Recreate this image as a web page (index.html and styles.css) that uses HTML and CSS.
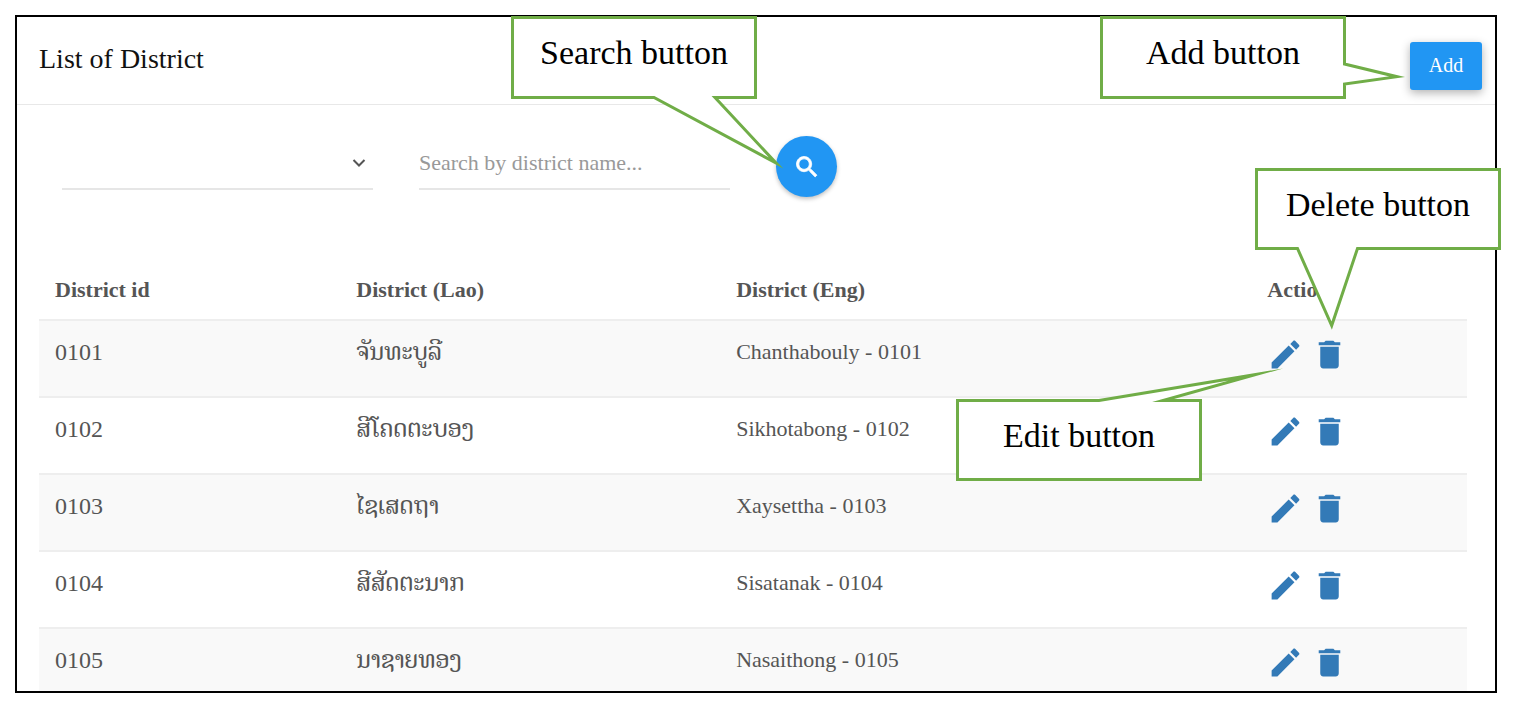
FILE: index.html
```html
<!DOCTYPE html>
<html lang="en">
<head>
  <meta charset="UTF-8" />
  <meta name="viewport" content="width=device-width, initial-scale=1.0"/>
  <title>List of District</title>
  <link rel="stylesheet" href="styles.css">
</head>
<body>
  <svg class="sprite" aria-hidden="true">
    <symbol id="pencil" viewBox="0 0 24 24">
      <path d="M20.71,7.04C21.1,6.65 21.1,6 20.71,5.63L18.37,3.29C18,2.9 17.35,2.9 16.96,3.29L15.12,5.12L18.87,8.87M3,17.25V21H6.75L17.81,9.93L14.06,6.18L3,17.25Z"/>
    </symbol>
    <symbol id="trash" viewBox="0 0 24 24">
      <path d="M19,4H15.5L14.5,3H9.5L8.5,4H5V6H19M6,19A2,2 0 0,0 8,21H16A2,2 0 0,0 18,19V7H6V19Z"/>
    </symbol>
  </svg>

  <div class="panel">
    <div class="header">
      <h1>List of District</h1>
      <button type="button" class="btn-add">Add</button>
    </div>

    <div class="content">
      <form class="filters" id="searchForm">
        <div class="field">
          <select id="province" aria-label="Province">
            <option value=""></option>
          </select>
          <svg class="chevron" viewBox="0 0 14 10"><path d="M1.5 2L7 7.5L12.5 2"/></svg>
        </div>
        <div class="field">
          <input type="text" id="keyword" aria-label="District name" placeholder="Search by district name...">
        </div>
        <div class="field">
          <button type="submit" class="btn-search" aria-label="Search">
            <svg viewBox="0 0 24 24"><path d="M15.5 14h-.79l-.28-.27C15.41 12.59 16 11.11 16 9.5 16 5.91 13.09 3 9.5 3S3 5.91 3 9.5 5.91 16 9.5 16c1.61 0 3.09-.59 4.23-1.57l.27.28v.79l5 4.99L20.49 19l-4.99-5zm-6 0C7.01 14 5 11.99 5 9.5S7.01 5 9.5 5 14 7.01 14 9.5 11.99 14 9.5 14z"/></svg>
          </button>
        </div>
      </form>

      <table class="districts">
        <thead>
          <tr>
            <th class="col-id">District id</th>
            <th class="col-lao">District (Lao)</th>
            <th class="col-eng">District (Eng)</th>
            <th>Action</th>
          </tr>
        </thead>
        <tbody>
          <tr>
            <td class="id">0101</td>
            <td class="lao" lang="lo">ຈັນທະບູລີ</td>
            <td>Chanthabouly - 0101</td>
            <td class="action"><a href="#" aria-label="Edit"><svg><use href="#pencil"/></svg></a><a href="#" aria-label="Delete"><svg><use href="#trash"/></svg></a></td>
          </tr>
          <tr>
            <td class="id">0102</td>
            <td class="lao" lang="lo">ສີໂຄດຕະບອງ</td>
            <td>Sikhotabong - 0102</td>
            <td class="action"><a href="#" aria-label="Edit"><svg><use href="#pencil"/></svg></a><a href="#" aria-label="Delete"><svg><use href="#trash"/></svg></a></td>
          </tr>
          <tr>
            <td class="id">0103</td>
            <td class="lao" lang="lo">ໄຊເສດຖາ</td>
            <td>Xaysettha - 0103</td>
            <td class="action"><a href="#" aria-label="Edit"><svg><use href="#pencil"/></svg></a><a href="#" aria-label="Delete"><svg><use href="#trash"/></svg></a></td>
          </tr>
          <tr>
            <td class="id">0104</td>
            <td class="lao" lang="lo">ສີສັດຕະນາກ</td>
            <td>Sisatanak - 0104</td>
            <td class="action"><a href="#" aria-label="Edit"><svg><use href="#pencil"/></svg></a><a href="#" aria-label="Delete"><svg><use href="#trash"/></svg></a></td>
          </tr>
          <tr>
            <td class="id">0105</td>
            <td class="lao" lang="lo">ນາຊາຍທອງ</td>
            <td>Nasaithong - 0105</td>
            <td class="action"><a href="#" aria-label="Edit"><svg><use href="#pencil"/></svg></a><a href="#" aria-label="Delete"><svg><use href="#trash"/></svg></a></td>
          </tr>
        </tbody>
      </table>
    </div>
  </div>

  <!-- callouts -->
  <div class="callout callout-search">
    <svg viewBox="0 0 246 83"><polygon points="1.5,1.5 244.5,1.5 244.5,81.5 204,81.5 265,147 143,81.5 1.5,81.5"/></svg>
    <span>Search button</span>
  </div>
  <div class="callout callout-add">
    <svg viewBox="0 0 246 83"><polygon points="1.5,1.5 244.5,1.5 244.5,48 297,60.7 244.5,68 244.5,81.5 1.5,81.5"/></svg>
    <span>Add button</span>
  </div>
  <div class="callout callout-delete">
    <svg viewBox="0 0 246 83"><polygon points="1.5,1.5 244.5,1.5 244.5,80.5 102.5,80.5 76.7,157.6 42.5,80.5 1.5,80.5"/></svg>
    <span>Delete button</span>
  </div>
  <div class="callout callout-edit">
    <svg viewBox="0 0 246 83"><polygon points="1.5,1.5 143,1.5 300,-24.5 207,1.5 244.5,1.5 244.5,80.5 1.5,80.5"/></svg>
    <span>Edit button</span>
  </div>

  <script>
    document.getElementById("searchForm").addEventListener("submit", function(e) {
      e.preventDefault();
      const keyword = document.getElementById("keyword").value.toLowerCase();
      document.querySelectorAll(".districts tbody tr").forEach(row => {
        row.hidden = !row.textContent.toLowerCase().includes(keyword);
      });
    });
  </script>
</body>
</html>
```
FILE: styles.css
```css
* {
  box-sizing: border-box;
}
body {
  position: relative;
  margin: 0;
  padding: 15px 17px 11px 15px;
  font-family: "Liberation Serif", "Times New Roman", serif;
  font-size: 22px;
  line-height: 28px;
  background: white;
  color: #555;
}
.sprite {
  position: absolute;
  width: 0;
  height: 0;
}
.panel {
  height: calc(100vh - 26px);
  border: 2px solid black;
  overflow: hidden;
}
.header {
  display: flex;
  justify-content: space-between;
  align-items: center;
  height: 88px;
  padding: 0 13px 0 22px;
  border-bottom: 1px solid #e8e8e8;
}
.header h1 {
  margin: 0 0 4px;
  font-size: 28px;
  font-weight: normal;
  color: #111;
}
.btn-add {
  width: 72px;
  height: 48px;
  margin-top: 10px;
  font-family: inherit;
  font-size: 20px;
  color: white;
  background: #2196f3;
  border: none;
  border-radius: 3px;
  box-shadow: 0 3px 10px rgba(0,0,0,0.3);
  cursor: pointer;
}
.content {
  padding: 31px 28px 0 22px;
}
.filters {
  display: flex;
  margin-bottom: 64px;
}
.field {
  position: relative;
  width: 25%;
  padding: 0 23px;
}
.field input, .field select {
  display: block;
  width: 100%;
  height: 54px;
  padding: 2px 0 0;
  font-family: inherit;
  font-size: 22px;
  color: #555;
  background: transparent;
  border: none;
  border-bottom: 2px solid #e6e6e6;
  border-radius: 0;
  outline: none;
  appearance: none;
}
.field input::placeholder {
  color: #999;
  opacity: 1;
}
.chevron {
  position: absolute;
  top: 22px;
  right: 30px;
  width: 14px;
  height: 10px;
  fill: none;
  stroke: #555;
  stroke-width: 2;
  pointer-events: none;
}
.btn-search {
  display: flex;
  justify-content: center;
  align-items: center;
  width: 61px;
  height: 61px;
  padding: 0;
  background: #2196f3;
  border: none;
  border-radius: 50%;
  box-shadow: 0 2px 4px rgba(0,0,0,0.25);
  cursor: pointer;
}
.btn-search svg {
  width: 28px;
  height: 28px;
  fill: white;
  stroke: white;
  stroke-width: 0.7;
}

.districts {
  width: 100%;
  table-layout: fixed;
  border-collapse: separate;
  border-spacing: 0;
}
.col-id { width: 21.1%; }
.col-lao { width: 26.6%; }
.col-eng { width: 37.2%; }
.districts th {
  height: 58px;
  padding: 0 16px;
  text-align: left;
}
.districts td {
  height: 77px;
  padding: 17px 16px 0;
  vertical-align: top;
  border-top: 2px solid #eee;
}
.districts tbody tr:nth-child(odd) {
  background: #f9f9f9;
}
.districts .id {
  font-size: 24px;
}
.districts .lao {
  font-family: "Noto Serif Lao", "Noto Sans Lao", "DejaVu Sans", sans-serif;
  font-size: 24px;
}
.districts .action {
  padding-top: 15px;
}
.action a {
  display: inline-block;
  margin-right: 7px;
  color: #337ab7;
}
.action svg {
  display: block;
  width: 37px;
  height: 37px;
  fill: currentColor;
}

.callout {
  position: absolute;
  width: 246px;
  height: 83px;
  font-size: 34px;
  line-height: 74px;
  text-align: center;
  color: black;
  pointer-events: none;
}
.callout svg {
  position: absolute;
  top: 0;
  left: 0;
  width: 100%;
  height: 100%;
  overflow: visible;
  fill: white;
  stroke: #70ad47;
  stroke-width: 3;
  stroke-miterlimit: 30;
}
.callout span {
  position: relative;
}
.callout-search { top: 16px; left: 511px; }
.callout-add { top: 16px; right: 168px; }
.callout-delete { top: 168px; right: 13px; }
.callout-edit { top: 399px; right: 312px; }
```
